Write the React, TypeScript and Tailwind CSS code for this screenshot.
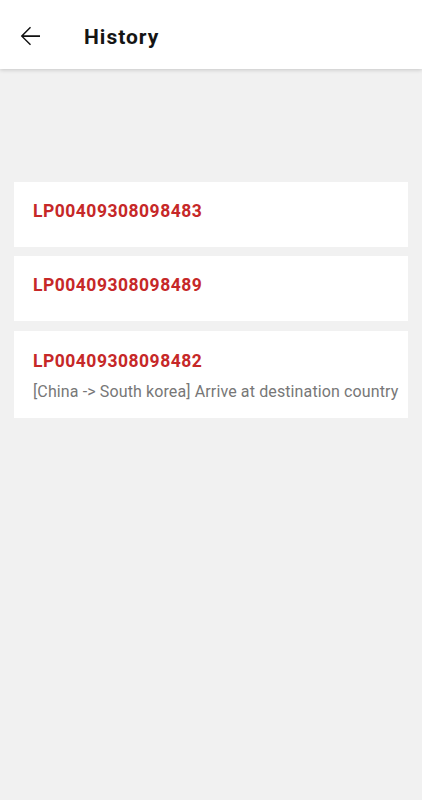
import React from "react";

const items = [
  { id: "LP00409308098483" },
  { id: "LP00409308098489" },
  { id: "LP00409308098482", sub: "[China -> South korea] Arrive at destination country" },
];

export default function App() {
  return (
    <div className="min-h-[800px] w-[422px] bg-[#f1f1f1]" style={{ fontFamily: "Roboto, 'Noto Sans', sans-serif" }}>
      <header className="relative z-10 flex h-[69px] items-start bg-white shadow-[0_1px_4px_rgba(0,0,0,0.18)]">
        <div className="ml-[15px] mt-[21px] text-[#111]">
          <svg width="30" height="30" viewBox="0 0 24 24" fill="currentColor">
            <path d="M20 11.3H6.9l5.9-5.9-.8-.8L4.6 12l7.4 7.4.8-.8-5.9-5.9H20z" />
          </svg>
        </div>
        <h1 className="ml-[39px] mt-[25px] text-[21px] font-bold leading-[24px] tracking-[1px] text-[#151515]">History</h1>
      </header>
      <div className="flex flex-col gap-[9px] px-[14px] pt-[113px]">
        {items.map((it) => (
          <div key={it.id} className={`bg-white px-[19px] ${it.sub ? "mt-[1px] pt-[18px] pb-[15px]" : "pt-[17px] pb-[24px]"}`}>
            <div className="text-[17.5px] font-bold leading-[24px] tracking-[0.5px] text-[#c62828]">{it.id}</div>
            {it.sub && (
              <div className="mt-[8px] whitespace-nowrap text-[16px] leading-[22px] tracking-[0.12px] text-[#777]">{it.sub}</div>
            )}
          </div>
        ))}
      </div>
    </div>
  );
}
